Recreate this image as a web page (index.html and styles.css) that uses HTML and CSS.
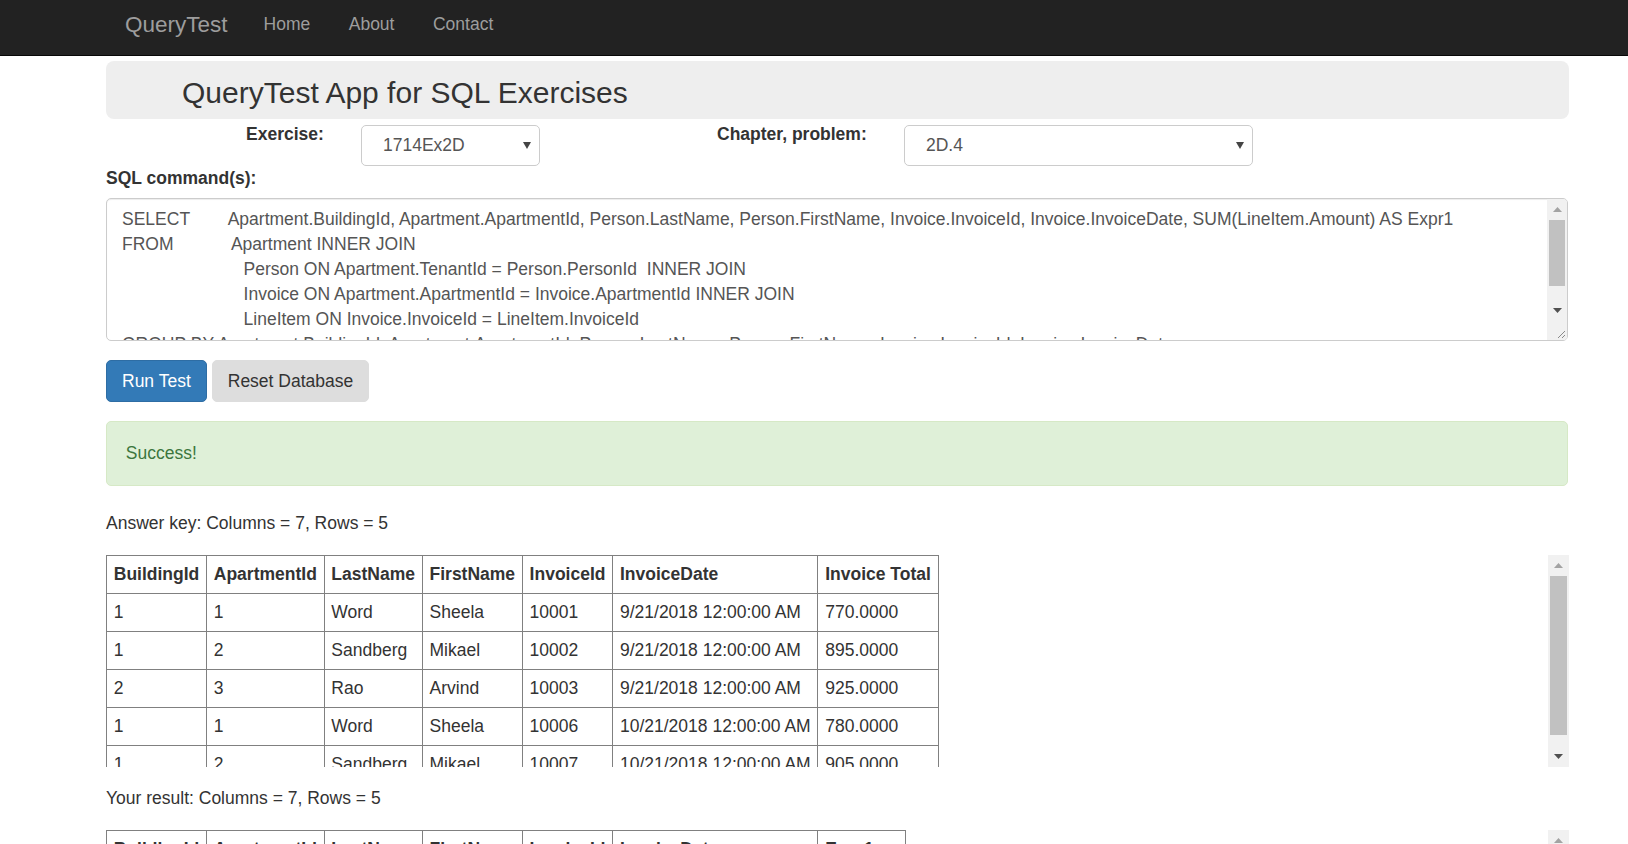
FILE: index.html
```html
<!DOCTYPE html>
<html lang="en">
<head>
<meta charset="utf-8">
<title>QueryTest</title>
<link rel="stylesheet" href="styles.css">
</head>
<body>
<nav class="navbar">
  <div class="nav-inner">
    <a class="brand" href="#">QueryTest</a>
    <a class="nav-link" href="#">Home</a>
    <a class="nav-link" href="#">About</a>
    <a class="nav-link" href="#">Contact</a>
  </div>
</nav>
<main class="page">
  <div class="jumbotron"><h2 class="title">QueryTest App for SQL Exercises</h2></div>
  <div class="form-row">
    <label class="lbl lbl-ex">Exercise:</label>
    <div class="select sel-ex"><span>1714Ex2D</span><svg class="caret" width="8" height="7" viewBox="0 0 8 7"><polygon points="0,0 8,0 4,7" fill="#444"/></svg></div>
    <label class="lbl lbl-ch">Chapter, problem:</label>
    <div class="select sel-ch"><span>2D.4</span><svg class="caret" width="8" height="7" viewBox="0 0 8 7"><polygon points="0,0 8,0 4,7" fill="#444"/></svg></div>
  </div>
  <label class="lbl lbl-sql">SQL command(s):</label>
  <div class="sql-box">
    <textarea class="sql" spellcheck="false">
SELECT        Apartment.BuildingId, Apartment.ApartmentId, Person.LastName, Person.FirstName, Invoice.InvoiceId, Invoice.InvoiceDate, SUM(LineItem.Amount) AS Expr1
FROM            Apartment INNER JOIN
                         Person ON Apartment.TenantId = Person.PersonId  INNER JOIN
                         Invoice ON Apartment.ApartmentId = Invoice.ApartmentId INNER JOIN
                         LineItem ON Invoice.InvoiceId = LineItem.InvoiceId
GROUP BY Apartment.BuildingId, Apartment.ApartmentId, Person.LastName, Person.FirstName, Invoice.InvoiceId, Invoice.InvoiceDate</textarea>
    <div class="vscroll vscroll-sql">
      <div class="sb-btn"><svg width="9" height="5" viewBox="0 0 9 5"><polygon points="0,5 9,5 4.5,0" fill="#a3a3a3"/></svg></div>
      <div class="sb-track"><div class="sb-thumb thumb-sql"></div></div>
      <div class="sb-btn"><svg width="9" height="5" viewBox="0 0 9 5"><polygon points="0,0 9,0 4.5,5" fill="#505050"/></svg></div>
      <div class="sb-corner"><svg width="20" height="20" viewBox="0 0 20 20"><line x1="18" y1="11" x2="11" y2="18" stroke="#8a8a8a" stroke-width="1"/><line x1="18" y1="15" x2="15" y2="18" stroke="#8a8a8a" stroke-width="1"/></svg></div>
    </div>
  </div>
  <div class="btn-row">
    <button class="btn btn-primary">Run Test</button>
    <button class="btn btn-default">Reset Database</button>
  </div>
  <div class="alert">Success!</div>
  <p class="count count-key">Answer key: Columns = 7, Rows = 5</p>
  <div class="scroll-box">
    <div class="table-view">
      <table class="grid">
        <tr><th>BuildingId</th><th>ApartmentId</th><th>LastName</th><th>FirstName</th><th>InvoiceId</th><th>InvoiceDate</th><th>Invoice Total</th></tr>
        <tr><td>1</td><td>1</td><td>Word</td><td>Sheela</td><td>10001</td><td>9/21/2018 12:00:00 AM</td><td>770.0000</td></tr>
        <tr><td>1</td><td>2</td><td>Sandberg</td><td>Mikael</td><td>10002</td><td>9/21/2018 12:00:00 AM</td><td>895.0000</td></tr>
        <tr><td>2</td><td>3</td><td>Rao</td><td>Arvind</td><td>10003</td><td>9/21/2018 12:00:00 AM</td><td>925.0000</td></tr>
        <tr><td>1</td><td>1</td><td>Word</td><td>Sheela</td><td>10006</td><td>10/21/2018 12:00:00 AM</td><td>780.0000</td></tr>
        <tr><td>1</td><td>2</td><td>Sandberg</td><td>Mikael</td><td>10007</td><td>10/21/2018 12:00:00 AM</td><td>905.0000</td></tr>
      </table>
    </div>
    <div class="vscroll vscroll-tbl">
      <div class="sb-btn"><svg width="9" height="5" viewBox="0 0 9 5"><polygon points="0,5 9,5 4.5,0" fill="#a3a3a3"/></svg></div>
      <div class="sb-track"><div class="sb-thumb thumb-tbl"></div></div>
      <div class="sb-btn"><svg width="9" height="5" viewBox="0 0 9 5"><polygon points="0,0 9,0 4.5,5" fill="#505050"/></svg></div>
    </div>
  </div>
  <p class="count count-res">Your result: Columns = 7, Rows = 5</p>
  <div class="scroll-box">
    <div class="table-view">
      <table class="grid">
        <tr><th>BuildingId</th><th>ApartmentId</th><th>LastName</th><th>FirstName</th><th>InvoiceId</th><th>InvoiceDate</th><th>Expr1</th></tr>
        <tr><td>1</td><td>1</td><td>Word</td><td>Sheela</td><td>10001</td><td>9/21/2018 12:00:00 AM</td><td>770.0000</td></tr>
        <tr><td>1</td><td>2</td><td>Sandberg</td><td>Mikael</td><td>10002</td><td>9/21/2018 12:00:00 AM</td><td>895.0000</td></tr>
        <tr><td>2</td><td>3</td><td>Rao</td><td>Arvind</td><td>10003</td><td>9/21/2018 12:00:00 AM</td><td>925.0000</td></tr>
        <tr><td>1</td><td>1</td><td>Word</td><td>Sheela</td><td>10006</td><td>10/21/2018 12:00:00 AM</td><td>780.0000</td></tr>
        <tr><td>1</td><td>2</td><td>Sandberg</td><td>Mikael</td><td>10007</td><td>10/21/2018 12:00:00 AM</td><td>905.0000</td></tr>
      </table>
    </div>
    <div class="vscroll vscroll-tbl">
      <div class="sb-btn"><svg width="9" height="5" viewBox="0 0 9 5"><polygon points="0,5 9,5 4.5,0" fill="#a3a3a3"/></svg></div>
      <div class="sb-track"><div class="sb-thumb thumb-tbl"></div></div>
      <div class="sb-btn"><svg width="9" height="5" viewBox="0 0 9 5"><polygon points="0,0 9,0 4.5,5" fill="#505050"/></svg></div>
    </div>
  </div>
</main>
</body>
</html>
```
FILE: styles.css
```css
html {
  overflow: hidden;
}
body {
  margin: 0;
  font-family: "Liberation Sans", Arial, sans-serif;
  font-size: 17.5px;
  line-height: 25px;
  color: #333;
  background: #fff;
}
.navbar {
  background: #222;
  border-bottom: 1px solid #080808;
  height: 55px;
}
.nav-inner {
  display: flex;
  align-items: center;
  height: 48px;
  padding-left: 125px;
}
.brand {
  font-size: 22.5px;
  color: #9d9d9d;
  text-decoration: none;
  margin-right: 36px;
}
.nav-link {
  font-size: 17.5px;
  color: #9d9d9d;
  text-decoration: none;
  margin-right: 38.5px;
}
.page {
  margin-left: 106px;
  width: 1463px;
}
.jumbotron {
  margin-top: 5px;
  height: 58px;
  box-sizing: border-box;
  background: #eee;
  border-radius: 8px;
  padding: 14.5px 0 0 76px;
}
.title {
  margin: 0;
  font-size: 30px;
  font-weight: normal;
  line-height: 33px;
  color: #333;
}
.form-row {
  display: flex;
  align-items: flex-start;
  margin-top: 3px;
  padding-left: 140px;
}
.lbl {
  font-weight: bold;
  display: block;
}
.lbl-ex {
  width: 115px;
}
.lbl-ch {
  margin-left: 177px;
  width: 187px;
}
.select {
  margin-top: 3px;
  height: 41px;
  box-sizing: border-box;
  border: 1px solid #ccc;
  border-radius: 5px;
  background: #fff;
  color: #555;
  display: flex;
  align-items: center;
  justify-content: space-between;
  padding: 0 8px 0 21px;
}
.sel-ex {
  width: 179px;
}
.sel-ch {
  width: 349px;
}
.caret {
  display: block;
}
.sql-box {
  display: flex;
  margin-top: 7px;
  width: 1462px;
  height: 143px;
  box-sizing: border-box;
  border: 1px solid #ccc;
  border-radius: 5px;
  box-shadow: inset 0 1px 1px rgba(0,0,0,.075);
  overflow: hidden;
  background: #fff;
}
.sql {
  flex: 1;
  display: block;
  border: 0;
  margin: 0;
  padding: 7.5px 15px;
  font-family: "Liberation Sans", Arial, sans-serif;
  font-size: 17.5px;
  line-height: 25px;
  color: #555;
  overflow: hidden;
  resize: none;
  background: transparent;
  outline: none;
}
.vscroll {
  display: flex;
  flex-direction: column;
  background: #f1f1f1;
  flex-shrink: 0;
}
.vscroll-sql {
  width: 20px;
}
.vscroll-tbl {
  width: 21px;
}
.sb-btn {
  height: 20px;
  display: flex;
  align-items: center;
  justify-content: center;
  flex-shrink: 0;
}
.vscroll-tbl .sb-btn {
  height: 21px;
}
.sb-track {
  flex: 1;
  display: flex;
  flex-direction: column;
}
.sb-thumb {
  background: #c1c1c1;
  margin: 0 2px;
}
.thumb-sql {
  height: 66px;
  margin-top: 1px;
}
.thumb-tbl {
  height: 159px;
}
.sb-corner {
  height: 20px;
  flex-shrink: 0;
  background: #f1f1f1;
}
.sb-corner svg {
  display: block;
}
.btn-row {
  display: flex;
  gap: 5px;
  margin-top: 19px;
}
.btn {
  font-family: "Liberation Sans", Arial, sans-serif;
  font-size: 17.5px;
  line-height: 25px;
  padding: 7.5px 15px;
  border: 1px solid transparent;
  border-radius: 5px;
  cursor: pointer;
}
.btn-primary {
  background: #337ab7;
  border-color: #2e6da4;
  color: #fff;
}
.btn-default {
  background: #ddd;
  border-color: #ddd;
  color: #333;
}
.alert {
  margin-top: 19px;
  width: 1462px;
  box-sizing: border-box;
  padding: 18.75px;
  background: #dff0d8;
  border: 1px solid #d6e9c6;
  border-radius: 5px;
  color: #3c763d;
}
.count {
  margin: 0;
}
.count-key {
  margin-top: 25.5px;
  margin-bottom: 19px;
}
.count-res {
  margin-top: 18.5px;
  margin-bottom: 19px;
}
.scroll-box {
  display: flex;
  width: 1463px;
  height: 212px;
}
.table-view {
  flex: 1;
  overflow: hidden;
}
.grid {
  border-collapse: collapse;
  border: 1px solid #808080;
}
.grid th,
.grid td {
  border: 1px solid #808080;
  padding: 6px 6.75px;
  text-align: left;
  white-space: nowrap;
}
.grid th {
  font-weight: bold;
}
```
